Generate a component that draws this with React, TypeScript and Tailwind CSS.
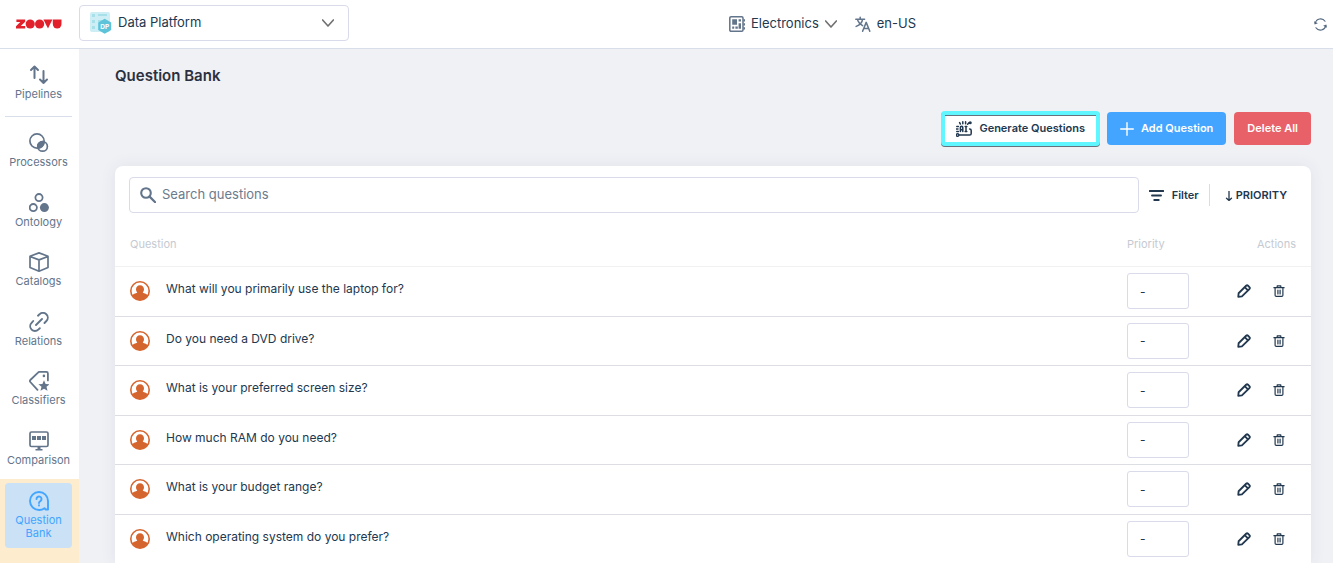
import React, { useState } from 'react';

const QUESTIONS = [
  'What will you primarily use the laptop for?',
  'Do you need a DVD drive?',
  'What is your preferred screen size?',
  'How much RAM do you need?',
  'What is your budget range?',
  'Which operating system do you prefer?',
];

interface IconProps {
  children: React.ReactNode;
  className?: string;
}

// 20x20 line icon
const Icon: React.FC<IconProps> = ({ children, className = 'size-5' }) => (
  <svg
    viewBox="0 0 20 20"
    className={`shrink-0 ${className}`}
    fill="none"
    stroke="currentColor"
    strokeWidth={1.7}
    strokeLinecap="round"
    strokeLinejoin="round"
    aria-hidden="true"
  >
    {children}
  </svg>
);

const NAV_ITEMS = [
  {
    label: 'Processors',
    icon: (
      <Icon>
        <circle cx="8" cy="8" r="7.1" />
        <circle cx="13.6" cy="13.4" r="4.8" />
        <path d="M15.15 8.85A7.2 7.2 0 0 1 9.1 15.1a4.8 4.8 0 0 1 6.050-6.250z" fill="currentColor" />
      </Icon>
    ),
  },
  {
    label: 'Ontology',
    icon: (
      <Icon>
        <circle cx="10" cy="4.6" r="3.6" strokeWidth="1.8" />
        <circle cx="4.3" cy="14.6" r="3.6" strokeWidth="1.8" />
        <circle cx="15.4" cy="14.6" r="4.5" fill="currentColor" stroke="none" />
      </Icon>
    ),
  },
  {
    label: 'Catalogs',
    icon: (
      <Icon>
        <path d="M10 .9l9 3.3v11.3l-9 3.7-9-3.700V4.2zM1 4.500l9 3.400 9-3.400M10 8v11" />
      </Icon>
    ),
  },
  {
    label: 'Relations',
    icon: (
      <Icon>
        <path d="M9 3.700l1.500-1.400a4.700 4.700 0 0 1 6.900 6.700L15.500 11M10.800 16.200l-1.500 1.400a4.700 4.700 0 0 1-6.700-6.700L4.200 9M7 13l6-6" strokeWidth="1.900" />
      </Icon>
    ),
  },
  {
    label: 'Classifiers',
    icon: (
      <Icon>
        <path d="M8.500 18.800L1.300 11a1.500 1.500 0 0 1 0-2L9 1.600a2 2 0 0 1 1.400-.7h7c.9 0 1.500.6 1.500 1.500v7" strokeWidth="1.800" />
        <circle cx="14.900" cy="4.900" r="1.300" fill="currentColor" stroke="none" />
        <path d="M15 9.200l1.600 3.700 4 .3-3.100 2.600 1 4-3.500-2.100-3.500 2.100 1-4-3.100-2.600 4-.3z" fill="currentColor" stroke="none" />
      </Icon>
    ),
  },
  {
    label: 'Comparison',
    icon: (
      <Icon>
        <rect x="1" y="1" width="18" height="14.500" rx="1.500" />
        <path d="M3 5h4v4H3zM8 5h4v4H8zM13 5h4v4h-4zM8.500 15.500h3V18h2v1.500h-7V18h2z" fill="currentColor" stroke="none" />
      </Icon>
    ),
  },
];

const ZoovuLogo = () => (
  <svg viewBox="0 0 46 10" className="h-[10px] w-[46px]" fill="#e2202c" role="img" aria-label="zoovu">
    <path d="M.4.6h8.800v2.200L4.800 7h4.400v2.400H0V7.300L4.300 3H.4z" />
    <circle cx="14.200" cy="5" r="4.600" />
    <circle cx="23.600" cy="5" r="4.600" />
    <path d="M27.400.5h9L32 9.500z" />
    <path d="M36.800.5h8.700v4.600a4.350 4.350 0 0 1-8.700 0z" />
  </svg>
);

const PlatformIcon = () => (
  <svg viewBox="0 0 22 22" className="size-[22px]" aria-hidden="true">
    <rect x="0" y="0" width="20" height="20" rx="2" fill="#cdeef4" />
    <path d="M2 2h3v3H2zM2 8h3v3H2zM2 14h3v3H2zM8 2h9v2H8zM8 8h5v2H8z" fill="#a8e0ea" />
    <path d="M14.700 6.800L21.200 10.500v7.400l-6.500 3.800-6.500-3.800v-7.400z" fill="#5cc3d8" />
    <text x="14.700" y="16.600" fontSize="6.500" fontWeight="700" fill="#fff" textAnchor="middle" fontFamily="Inter, sans-serif">DP</text>
  </svg>
);

const Chevron = () => (
  <Icon className="size-3 text-[#717171]">
    <path d="M1 5l9 10 9-10" strokeWidth="2.800" />
  </Icon>
);

const UserAvatar = () => (
  <svg viewBox="0 0 20 20" className="size-5" aria-hidden="true">
    <circle cx="10" cy="10" r="9.200" fill="#fff" stroke="#d5652f" strokeWidth="1.600" />
    <path d="M10 4.200c2.500 0 4 1.700 4 4 0 1.300-.5 2.300-1.200 3.100.3 1.200 3.700 1.100 5 3A9.200 9.200 0 0 1 10 19.200a9.200 9.200 0 0 1-7.800-4.900c1.300-1.900 4.700-1.800 5-3C6.500 10.500 6 9.500 6 8.200c0-2.300 1.500-4 4-4z" fill="#d5652f" />
  </svg>
);

const PencilIcon = () => (
  <Icon className="size-[14px]">
    <path d="M1.800 18.200l.5-5L13 2.500a2 2 0 0 1 2.800 0l1.900 1.900a2 2 0 0 1 0 2.800L7 17.800zM11 4.500l4.700 4.700" strokeWidth="2.600" />
  </Icon>
);

const TrashIcon = () => (
  <Icon className="size-3">
    <path d="M1.500 4.500h17M7 4V1.500h6V4M3.500 4.500V17a2 2 0 0 0 2 2h9a2 2 0 0 0 2-2V4.500M8.200 8.500v6.500M11.800 8.500v6.500" strokeWidth="2" />
  </Icon>
);

const AiIcon = () => (
  <Icon className="size-4">
    <path d="M5.500 13V8a1.500 1.500 0 0 1 3 0v5M5.500 11h3M12.500 7v6M11.500 7h2M11.500 13h2M1 7h2M0 10h2.500M1 13h2M4.500 2l1 1.800M8.500 1v2.500M12 1v2.500M14.500 4l2-2M3.500 17.500h13.500a2 2 0 0 0 2-2V12a2 2 0 0 0-2-2" strokeWidth="1.900" />
    <circle cx="2" cy="17.500" r="1.600" />
    <circle cx="17.800" cy="2.200" r="1.900" fill="currentColor" stroke="none" />
  </Icon>
);

const App: React.FC = () => {
  const [search, setSearch] = useState('');

  return (
    <div className="flex h-screen flex-col overflow-hidden bg-[#f0f1f5] font-['Inter',sans-serif] text-[#22384f]">
      <header className="flex h-[49px] shrink-0 items-center border-b border-[#d9deeb] bg-white pr-1.5">
        <a href="#home" className="flex w-[79px] shrink-0 pl-4">
          <ZoovuLogo />
        </a>
        <button className="mb-[3px] flex h-9 w-[270px] shrink-0 items-center rounded border border-[#d9daea] px-2.5 text-[13px]">
          <PlatformIcon />
          <span className="ml-1.5 flex-1 text-left">Data Platform</span>
          <span className="mr-1"><Chevron /></span>
        </button>
        <div className="flex flex-1 items-center justify-center gap-[18px] pr-[18px] text-[13px]">
          <button className="flex items-center gap-1.5">
            <Icon className="size-4 text-[#63758b]">
              <rect x="1" y="1" width="16.500" height="18" rx="1.500" strokeWidth="1.900" />
              <path d="M4 4h6v7H4zM4 13h2.500v3H4zM8 13h3v3H8zM12 4h3v3h-3zM12 9h3v7h-3zM18 4h2v3h-2zM18 9h2v3h-2zM18 14h2v3h-2z" fill="currentColor" stroke="none" />
            </Icon>
            Electronics
            <Chevron />
          </button>
          <button className="flex items-center gap-1.5">
            <Icon className="size-4 text-[#63758b]">
              <path d="M1 4h11M6.500 1.500V4M9.500 4C9 8 5.500 11.500 1.500 13M3.500 5.500C4.500 8.500 7 10.500 9.500 12M9.500 19l4.500-11 4.500 11M11.200 15.500h5.600" strokeWidth="1.900" />
            </Icon>
            en-US
          </button>
        </div>
        <button aria-label="Refresh" className="text-[#52677e]">
          <Icon className="size-[13px]">
            <path d="M2 8a8.300 8.300 0 0 1 15-3M18 12A8.300 8.300 0 0 1 3 15" strokeWidth="1.800" />
            <path d="M0 5l1 5 5-2zM20 15l-1-5-5 2z" fill="currentColor" stroke="none" />
          </Icon>
        </button>
      </header>

      <div className="flex min-h-0 flex-1">
        <nav className="flex w-[79px] shrink-0 flex-col bg-white text-center text-[11px] leading-[13px] text-[#63758b]">
          <a href="#pipelines" className="ml-[5px] mr-[7px] flex h-[68px] flex-col items-center gap-[3px] border-b border-[#d9deeb] pt-4">
            <Icon>
              <path d="M5.500 13V1.500M2 5l3.500-3.500L9 5M14.500 6v12M11 14.500l3.500 3.500 3.500-3.500" strokeWidth="2" />
            </Icon>
            Pipelines
          </a>
          <div className="ml-[5px] mr-[7px] flex flex-col pt-4">
            {NAV_ITEMS.map((item) => (
              <a key={item.label} href={`#${item.label.toLowerCase()}`} className="flex flex-col items-center gap-[3px] odd:h-[60px] even:h-[59px]">
                {item.icon}
                {item.label}
              </a>
            ))}
          </div>
          <div className="-mt-[11px] flex-1 bg-[#fdeccd] pl-[5px] pr-[7px] pt-1">
            <a href="#question-bank" className="flex h-[65px] flex-col items-center gap-[3px] rounded bg-[#cae1f6] pt-2 text-[#42a5ff]">
              <Icon>
                <path d="M10 19a9 9 0 1 1 9-9v8.500h-2.500L15.500 17.200A9 9 0 0 1 10 19z" strokeWidth="1.900" />
                <path d="M7.500 8a2.500 2.500 0 1 1 4 2c-.9.700-1.500 1-1.500 2M10 14.300v.2" strokeWidth="1.900" />
              </Icon>
              <span>Question<br />Bank</span>
            </a>
          </div>
        </nav>

        <main className="flex min-w-0 flex-1 flex-col pl-9 pr-[22px] pt-[17px]">
          <h1 className="text-[15px] font-semibold leading-5 text-[#2b3040]">Question Bank</h1>
          <div className="mt-[26px] flex justify-end gap-2 text-[11px] font-semibold">
            <button className="-my-px -mr-px flex h-[35px] items-center gap-[7px] rounded border-4 border-[#5ff6ff] bg-white px-[11px] shadow-[0_1px_0_#66727d,inset_0_1px_0_#66727d]">
              <AiIcon />
              Generate Questions
            </button>
            <button className="flex h-[33px] items-center gap-[7px] rounded-sm bg-[#43a5ff] px-[13px] text-white">
              <Icon className="size-[14px]">
                <path d="M10 1v18M1 10h18" strokeWidth="2" />
              </Icon>
              Add Question
            </button>
            <button className="h-[33px] rounded-sm bg-[#e96168] px-[13px] text-white">Delete All</button>
          </div>

          <section className="mt-[21px] flex-1 rounded-t-lg bg-white shadow-[0_0_16px_rgba(60,70,110,0.08)]">
            <div className="flex items-center px-3.5 pt-[11px]">
              <label className="flex h-9 flex-1 items-center gap-1.5 rounded border border-[#d9daea] px-2.5 text-[#63758b]">
                <Icon className="size-4">
                  <circle cx="7.500" cy="7.500" r="6" strokeWidth="2.600" />
                  <path d="M12 12l7 7" strokeWidth="2.800" />
                </Icon>
                <input
                  type="text"
                  aria-label="Search questions"
                  placeholder="Search questions"
                  value={search}
                  onChange={(e) => setSearch(e.target.value)}
                  className="w-full bg-transparent text-[13px] outline-none placeholder:text-[#6b7b8d]"
                />
              </label>
              <button className="ml-2.5 flex items-center gap-2 text-[11px] font-semibold">
                <Icon className="size-[15px]">
                  <path d="M1 4h18M4 10h12M7 16h6" strokeWidth="2.500" />
                </Icon>
                Filter
              </button>
              <div className="ml-2.5 mr-3.5 h-[22px] w-px bg-[#d9daea]" />
              <button className="mr-2.5 flex items-center gap-0.5 text-[11px] font-semibold">
                <Icon className="mt-0.5 size-[10px]">
                  <path d="M10 0v19M5 14.500l5 4.500 5-4.500" strokeWidth="2.600" />
                </Icon>
                PRIORITY
              </button>
            </div>

            <table className="mt-2.5 w-full table-fixed border-collapse text-left">
              <thead>
                <tr className="h-[43px] border-b border-[#eff1f3] text-[11px] text-[#c5cad2]">
                  <th className="pl-[15px] font-normal">Question</th>
                  <th className="w-[90px] font-normal">Priority</th>
                  <th className="w-[94px] pr-[15px] text-right font-normal">Actions</th>
                </tr>
              </thead>
              <tbody>
                {QUESTIONS.map((question) => (
                  <tr key={question} className="border-b border-[#dddee3] odd:h-[50px] even:h-[49px]">
                    <td className="pl-[15px]">
                      <div className="flex items-center gap-4 text-xs">
                        <UserAvatar />
                        <span className="pb-1">{question}</span>
                      </div>
                    </td>
                    <td>
                      <input
                        type="text"
                        aria-label={`Priority: ${question}`}
                        defaultValue="-"
                        className="block h-9 w-[62px] rounded-[3px] border border-[#d9daea] px-3 text-xs outline-none"
                      />
                    </td>
                    <td>
                      <div className="flex items-center justify-end gap-[22px] pr-[26px]">
                        <button aria-label="Edit question"><PencilIcon /></button>
                        <button aria-label="Delete question"><TrashIcon /></button>
                      </div>
                    </td>
                  </tr>
                ))}
              </tbody>
            </table>
          </section>
        </main>
      </div>
    </div>
  );
};

export default App;
